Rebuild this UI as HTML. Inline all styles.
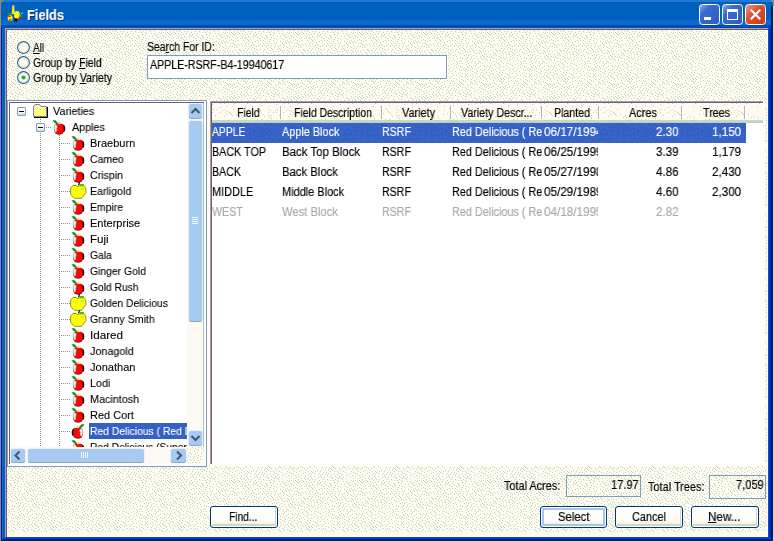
<!DOCTYPE html>
<html><head><meta charset="utf-8"><title>Fields</title><style>
html,body{margin:0;padding:0}
body{width:774px;height:542px;position:relative;overflow:hidden;background:#FFFBF0;font-family:"Liberation Sans",sans-serif}
.a{position:absolute}
.t{position:absolute;white-space:pre;line-height:16px;transform-origin:0 0;display:block;will-change:transform;-webkit-text-stroke:0.16px}
.ts{text-shadow:1px 1px 0 #0A2C8C}
.tr{-webkit-text-stroke:0.1px}
.clip{position:absolute;overflow:hidden}
u{text-decoration:underline;text-decoration-thickness:1px;text-underline-offset:1px}
</style></head><body>
<svg class="a" width="0" height="0"><defs>
<pattern id="d" width="64" height="64" patternUnits="userSpaceOnUse"><path d="M5 0.5h1M11 0.5h1M14 0.5h1M19 0.5h1M26 0.5h1M30 0.5h1M38 0.5h1M41 0.5h1M44 0.5h1M0 1.5h1M8 1.5h1M15 1.5h1M35 1.5h1M42 1.5h1M45 1.5h1M49 1.5h1M52 1.5h1M60 1.5h1M3 2.5h1M6 2.5h1M10 2.5h1M24 2.5h1M28 2.5h1M32 2.5h1M39 2.5h1M46 2.5h1M56 2.5h1M11 3.5h1M16 3.5h1M19 3.5h1M26 3.5h1M30 3.5h1M33 3.5h1M36 3.5h1M40 3.5h1M43 3.5h1M51 3.5h1M59 3.5h1M62 3.5h1M7 4.5h1M20 4.5h1M23 4.5h1M34 4.5h1M38 4.5h1M45 4.5h1M48 4.5h1M54 4.5h1M57 4.5h1M2 5.5h1M10 5.5h1M21 5.5h1M27 5.5h1M31 5.5h1M35 5.5h1M42 5.5h1M55 5.5h1M61 5.5h1M3 6.5h1M14 6.5h1M17 6.5h1M22 6.5h1M25 6.5h1M28 6.5h1M33 6.5h1M49 6.5h1M53 6.5h1M56 6.5h1M4 7.5h1M8 7.5h1M23 7.5h1M30 7.5h1M38 7.5h1M43 7.5h1M46 7.5h1M50 7.5h1M58 7.5h1M63 7.5h1M1 8.5h1M11 8.5h1M18 8.5h1M26 8.5h1M36 8.5h1M41 8.5h1M47 8.5h1M54 8.5h1M60 8.5h1M3 9.5h1M7 9.5h1M13 9.5h1M20 9.5h1M32 9.5h1M48 9.5h1M51 9.5h1M0 10.5h1M10 10.5h1M24 10.5h1M30 10.5h1M34 10.5h1M38 10.5h1M44 10.5h1M49 10.5h1M58 10.5h1M61 10.5h1M6 11.5h1M17 11.5h1M22 11.5h1M27 11.5h1M36 11.5h1M50 11.5h1M56 11.5h1M2 12.5h1M13 12.5h1M25 12.5h1M28 12.5h1M47 12.5h1M53 12.5h1M59 12.5h1M0 13.5h1M4 13.5h1M7 13.5h1M11 13.5h1M19 13.5h1M23 13.5h1M31 13.5h1M34 13.5h1M42 13.5h1M20 14.5h1M26 14.5h1M35 14.5h1M38 14.5h1M46 14.5h1M49 14.5h1M54 14.5h1M61 14.5h1M1 15.5h1M5 15.5h1M8 15.5h1M12 15.5h1M17 15.5h1M21 15.5h1M36 15.5h1M40 15.5h1M43 15.5h1M52 15.5h1M55 15.5h1M59 15.5h1M3 16.5h1M15 16.5h1M23 16.5h1M27 16.5h1M30 16.5h1M33 16.5h1M37 16.5h1M47 16.5h1M50 16.5h1M57 16.5h1M63 16.5h1M7 17.5h1M11 17.5h1M20 17.5h1M24 17.5h1M35 17.5h1M38 17.5h1M53 17.5h1M4 18.5h1M8 18.5h1M16 18.5h1M26 18.5h1M29 18.5h1M46 18.5h1M49 18.5h1M55 18.5h1M1 19.5h1M9 19.5h1M14 19.5h1M17 19.5h1M40 19.5h1M52 19.5h1M57 19.5h1M61 19.5h1M7 20.5h1M18 20.5h1M21 20.5h1M24 20.5h1M28 20.5h1M36 20.5h1M41 20.5h1M44 20.5h1M48 20.5h1M59 20.5h1M0 21.5h1M10 21.5h1M15 21.5h1M19 21.5h1M25 21.5h1M30 21.5h1M33 21.5h1M42 21.5h1M45 21.5h1M55 21.5h1M3 22.5h1M12 22.5h1M22 22.5h1M26 22.5h1M38 22.5h1M47 22.5h1M50 22.5h1M53 22.5h1M57 22.5h1M61 22.5h1M5 23.5h1M8 23.5h1M20 23.5h1M24 23.5h1M29 23.5h1M39 23.5h1M44 23.5h1M58 23.5h1M0 24.5h1M11 24.5h1M15 24.5h1M31 24.5h1M35 24.5h1M40 24.5h1M48 24.5h1M51 24.5h1M54 24.5h1M59 24.5h1M9 25.5h1M13 25.5h1M18 25.5h1M27 25.5h1M38 25.5h1M41 25.5h1M46 25.5h1M57 25.5h1M62 25.5h1M1 26.5h1M21 26.5h1M25 26.5h1M28 26.5h1M32 26.5h1M36 26.5h1M44 26.5h1M55 26.5h1M5 27.5h1M12 27.5h1M16 27.5h1M29 27.5h1M34 27.5h1M37 27.5h1M45 27.5h1M48 27.5h1M51 27.5h1M59 27.5h1M2 28.5h1M7 28.5h1M10 28.5h1M19 28.5h1M26 28.5h1M30 28.5h1M38 28.5h1M46 28.5h1M57 28.5h1M62 28.5h1M11 29.5h1M15 29.5h1M23 29.5h1M28 29.5h1M31 29.5h1M41 29.5h1M44 29.5h1M49 29.5h1M55 29.5h1M4 30.5h1M17 30.5h1M32 30.5h1M35 30.5h1M52 30.5h1M60 30.5h1M63 30.5h1M1 31.5h1M6 31.5h1M12 31.5h1M19 31.5h1M24 31.5h1M38 31.5h1M46 31.5h1M54 31.5h1M58 31.5h1M2 32.5h1M10 32.5h1M16 32.5h1M25 32.5h1M30 32.5h1M34 32.5h1M41 32.5h1M51 32.5h1M4 33.5h1M7 33.5h1M13 33.5h1M20 33.5h1M23 33.5h1M27 33.5h1M36 33.5h1M43 33.5h1M48 33.5h1M53 33.5h1M62 33.5h1M1 34.5h1M11 34.5h1M21 34.5h1M39 34.5h1M44 34.5h1M55 34.5h1M60 34.5h1M3 35.5h1M14 35.5h1M18 35.5h1M32 35.5h1M35 35.5h1M51 35.5h1M57 35.5h1M63 35.5h1M5 36.5h1M12 36.5h1M16 36.5h1M20 36.5h1M25 36.5h1M29 36.5h1M40 36.5h1M45 36.5h1M48 36.5h1M1 37.5h1M7 37.5h1M13 37.5h1M23 37.5h1M31 37.5h1M34 37.5h1M42 37.5h1M53 37.5h1M59 37.5h1M10 38.5h1M17 38.5h1M37 38.5h1M44 38.5h1M55 38.5h1M62 38.5h1M4 39.5h1M8 39.5h1M11 39.5h1M21 39.5h1M25 39.5h1M29 39.5h1M33 39.5h1M40 39.5h1M51 39.5h1M57 39.5h1M6 40.5h1M9 40.5h1M12 40.5h1M15 40.5h1M27 40.5h1M38 40.5h1M45 40.5h1M48 40.5h1M54 40.5h1M61 40.5h1M0 41.5h1M10 41.5h1M17 41.5h1M22 41.5h1M36 41.5h1M41 41.5h1M59 41.5h1M5 42.5h1M19 42.5h1M26 42.5h1M31 42.5h1M34 42.5h1M44 42.5h1M47 42.5h1M3 43.5h1M7 43.5h1M12 43.5h1M21 43.5h1M28 43.5h1M37 43.5h1M50 43.5h1M54 43.5h1M57 43.5h1M61 43.5h1M10 44.5h1M17 44.5h1M25 44.5h1M30 44.5h1M35 44.5h1M38 44.5h1M42 44.5h1M46 44.5h1M52 44.5h1M1 45.5h1M5 45.5h1M11 45.5h1M15 45.5h1M27 45.5h1M33 45.5h1M53 45.5h1M62 45.5h1M7 46.5h1M12 46.5h1M20 46.5h1M24 46.5h1M28 46.5h1M39 46.5h1M44 46.5h1M49 46.5h1M54 46.5h1M59 46.5h1M4 47.5h1M10 47.5h1M17 47.5h1M22 47.5h1M29 47.5h1M34 47.5h1M37 47.5h1M42 47.5h1M51 47.5h1M55 47.5h1M60 47.5h1M25 48.5h1M30 48.5h1M40 48.5h1M45 48.5h1M48 48.5h1M53 48.5h1M58 48.5h1M63 48.5h1M1 49.5h1M6 49.5h1M12 49.5h1M16 49.5h1M21 49.5h1M31 49.5h1M35 49.5h1M43 49.5h1M46 49.5h1M49 49.5h1M8 50.5h1M19 50.5h1M28 50.5h1M38 50.5h1M44 50.5h1M56 50.5h1M60 50.5h1M4 51.5h1M10 51.5h1M15 51.5h1M20 51.5h1M24 51.5h1M32 51.5h1M42 51.5h1M45 51.5h1M48 51.5h1M53 51.5h1M58 51.5h1M62 51.5h1M5 52.5h1M16 52.5h1M21 52.5h1M26 52.5h1M37 52.5h1M46 52.5h1M51 52.5h1M2 53.5h1M6 53.5h1M17 53.5h1M27 53.5h1M30 53.5h1M34 53.5h1M39 53.5h1M47 53.5h1M59 53.5h1M63 53.5h1M3 54.5h1M8 54.5h1M12 54.5h1M15 54.5h1M19 54.5h1M22 54.5h1M28 54.5h1M31 54.5h1M35 54.5h1M41 54.5h1M44 54.5h1M53 54.5h1M1 55.5h1M4 55.5h1M25 55.5h1M29 55.5h1M33 55.5h1M50 55.5h1M58 55.5h1M62 55.5h1M5 56.5h1M13 56.5h1M38 56.5h1M43 56.5h1M54 56.5h1M3 57.5h1M7 57.5h1M10 57.5h1M16 57.5h1M24 57.5h1M31 57.5h1M36 57.5h1M45 57.5h1M48 57.5h1M52 57.5h1M57 57.5h1M11 58.5h1M18 58.5h1M26 58.5h1M33 58.5h1M42 58.5h1M49 58.5h1M60 58.5h1M63 58.5h1M1 59.5h1M13 59.5h1M20 59.5h1M23 59.5h1M28 59.5h1M40 59.5h1M46 59.5h1M51 59.5h1M56 59.5h1M4 60.5h1M7 60.5h1M10 60.5h1M15 60.5h1M30 60.5h1M35 60.5h1M48 60.5h1M59 60.5h1M62 60.5h1M0 61.5h1M19 61.5h1M22 61.5h1M25 61.5h1M32 61.5h1M38 61.5h1M45 61.5h1M57 61.5h1M3 62.5h1M8 62.5h1M12 62.5h1M28 62.5h1M33 62.5h1M36 62.5h1M42 62.5h1M47 62.5h1M51 62.5h1M4 63.5h1M10 63.5h1M13 63.5h1M16 63.5h1M23 63.5h1M34 63.5h1M48 63.5h1M55 63.5h1M58 63.5h1M61 63.5h1" stroke="#B8DABC" stroke-width="1" fill="none" shape-rendering="crispEdges"/></pattern>
<pattern id="d2" width="64" height="64" patternUnits="userSpaceOnUse"><path d="M8 0.5h1M12 0.5h1M22 0.5h1M35 0.5h1M0 1.5h1M49 2.5h1M14 3.5h1M33 3.5h1M40 3.5h1M57 3.5h1M8 4.5h1M45 5.5h1M1 6.5h1M4 6.5h1M21 6.5h1M46 6.5h1M56 6.5h1M10 7.5h1M13 7.5h1M40 7.5h1M47 7.5h1M58 7.5h1M63 7.5h1M15 8.5h1M48 8.5h1M0 9.5h1M7 9.5h1M17 9.5h1M49 9.5h1M56 9.5h1M61 9.5h1M18 10.5h1M43 10.5h1M14 11.5h1M19 11.5h1M24 11.5h1M39 11.5h1M51 11.5h1M3 12.5h1M20 12.5h1M29 12.5h1M56 12.5h1M59 12.5h1M12 13.5h1M33 13.5h1M52 13.5h1M57 13.5h1M27 14.5h1M30 14.5h1M58 14.5h1M34 15.5h1M59 15.5h1M45 16.5h1M49 16.5h1M15 17.5h1M18 17.5h1M22 17.5h1M52 17.5h1M7 18.5h1M13 18.5h1M8 19.5h1M32 19.5h1M5 20.5h1M9 20.5h1M37 20.5h1M46 20.5h1M2 21.5h1M10 21.5h1M17 21.5h1M58 21.5h1M53 22.5h1M56 22.5h1M59 22.5h1M38 23.5h1M60 23.5h1M61 24.5h1M15 25.5h1M31 25.5h1M44 25.5h1M8 26.5h1M17 26.5h1M58 26.5h1M23 28.5h1M29 28.5h1M5 29.5h1M35 29.5h1M43 29.5h1M54 29.5h1M37 30.5h1M19 31.5h1M47 31.5h1M50 31.5h1M13 32.5h1M22 32.5h1M31 32.5h1M45 32.5h1M48 32.5h1M20 33.5h1M49 33.5h1M63 33.5h1M12 34.5h1M16 34.5h1M50 34.5h1M24 35.5h1M51 35.5h1M56 35.5h1M19 36.5h1M32 36.5h1M36 36.5h1M43 36.5h1M61 36.5h1M16 37.5h1M7 38.5h1M39 38.5h1M51 38.5h1M28 39.5h1M35 39.5h1M52 39.5h1M55 39.5h1M18 40.5h1M48 40.5h1M53 40.5h1M56 40.5h1M3 41.5h1M15 41.5h1M22 41.5h1M31 41.5h1M54 41.5h1M57 41.5h1M55 42.5h1M58 42.5h1M61 42.5h1M45 43.5h1M53 43.5h1M59 43.5h1M50 44.5h1M6 45.5h1M38 45.5h1M41 45.5h1M51 45.5h1M61 45.5h1M32 46.5h1M52 46.5h1M5 47.5h1M29 47.5h1M17 48.5h1M15 49.5h1M50 49.5h1M61 49.5h1M0 50.5h1M8 50.5h1M22 50.5h1M27 50.5h1M3 51.5h1M17 51.5h1M46 51.5h1M41 52.5h1M47 52.5h1M50 53.5h1M0 54.5h1M9 55.5h1M26 55.5h1M30 55.5h1M37 55.5h1M47 55.5h1M56 55.5h1M59 55.5h1M24 56.5h1M35 56.5h1M42 56.5h1M16 57.5h1M38 57.5h1M49 57.5h1M53 58.5h1M22 59.5h1M4 60.5h1M8 60.5h1M13 60.5h1M0 62.5h1M19 62.5h1M50 62.5h1M57 62.5h1M39 63.5h1M46 63.5h1" stroke="#B8DABC" stroke-width="1" fill="none" shape-rendering="crispEdges"/></pattern>
<pattern id="d3" width="64" height="64" patternUnits="userSpaceOnUse"><path d="M2 0.5h1M9 0.5h1M30 0.5h1M40 0.5h1M51 0.5h1M57 0.5h1M60 0.5h1M14 1.5h1M31 1.5h1M47 1.5h1M55 1.5h1M62 1.5h1M23 2.5h1M34 2.5h1M39 2.5h1M50 2.5h1M9 3.5h1M25 3.5h1M37 3.5h1M41 3.5h1M48 3.5h1M54 3.5h1M59 3.5h1M6 4.5h1M35 4.5h1M52 4.5h1M61 4.5h1M0 5.5h1M4 5.5h1M11 5.5h1M19 5.5h1M24 5.5h1M33 5.5h1M43 5.5h1M56 5.5h1M13 6.5h1M45 6.5h1M3 7.5h1M17 7.5h1M36 7.5h1M40 7.5h1M59 7.5h1M62 7.5h1M0 8.5h1M5 8.5h1M8 8.5h1M25 8.5h1M33 8.5h1M44 8.5h1M47 8.5h1M54 8.5h1M12 9.5h1M28 9.5h1M31 9.5h1M2 10.5h1M16 10.5h1M19 10.5h1M24 10.5h1M35 10.5h1M40 10.5h1M52 10.5h1M57 10.5h1M61 10.5h1M43 11.5h1M25 12.5h1M62 12.5h1M3 13.5h1M18 13.5h1M41 13.5h1M55 13.5h1M60 13.5h1M0 14.5h1M7 14.5h1M11 14.5h1M15 14.5h1M23 14.5h1M31 14.5h1M2 15.5h1M36 15.5h1M46 15.5h1M50 15.5h1M54 15.5h1M62 15.5h1M19 16.5h1M24 16.5h1M27 16.5h1M30 16.5h1M39 16.5h1M59 16.5h1M0 17.5h1M32 17.5h1M43 17.5h1M7 18.5h1M18 18.5h1M23 18.5h1M38 18.5h1M48 18.5h1M52 18.5h1M56 18.5h1M1 19.5h1M4 19.5h1M13 19.5h1M30 19.5h1M61 19.5h1M16 20.5h1M32 20.5h1M39 20.5h1M43 20.5h1M58 20.5h1M2 21.5h1M12 21.5h1M24 21.5h1M47 21.5h1M8 22.5h1M18 22.5h1M22 22.5h1M28 22.5h1M31 22.5h1M41 22.5h1M57 22.5h1M62 22.5h1M5 23.5h1M11 23.5h1M15 23.5h1M33 23.5h1M50 23.5h1M55 23.5h1M12 24.5h1M25 24.5h1M46 24.5h1M53 24.5h1M60 24.5h1M20 25.5h1M30 25.5h1M35 25.5h1M40 25.5h1M58 25.5h1M26 26.5h1M37 26.5h1M47 26.5h1M54 26.5h1M61 26.5h1M19 27.5h1M24 27.5h1M45 27.5h1M56 27.5h1M59 27.5h1M2 28.5h1M7 28.5h1M22 28.5h1M28 28.5h1M42 28.5h1M0 29.5h1M5 29.5h1M15 29.5h1M49 29.5h1M54 29.5h1M9 30.5h1M21 30.5h1M37 30.5h1M51 30.5h1M18 31.5h1M31 31.5h1M41 31.5h1M45 31.5h1M63 31.5h1M1 32.5h1M23 32.5h1M54 32.5h1M2 33.5h1M12 33.5h1M17 33.5h1M40 33.5h1M43 33.5h1M48 33.5h1M60 33.5h1M0 34.5h1M5 34.5h1M8 34.5h1M21 34.5h1M56 34.5h1M16 35.5h1M19 35.5h1M34 35.5h1M39 35.5h1M44 35.5h1M49 35.5h1M58 35.5h1M11 36.5h1M31 36.5h1M47 36.5h1M51 36.5h1M60 36.5h1M1 37.5h1M7 37.5h1M21 37.5h1M53 37.5h1M10 38.5h1M18 38.5h1M30 38.5h1M34 38.5h1M37 38.5h1M41 38.5h1M50 38.5h1M56 38.5h1M5 39.5h1M12 39.5h1M39 39.5h1M48 39.5h1M1 40.5h1M16 40.5h1M21 40.5h1M35 40.5h1M45 40.5h1M60 40.5h1M23 41.5h1M31 41.5h1M5 42.5h1M15 42.5h1M28 42.5h1M38 42.5h1M48 42.5h1M53 42.5h1M2 43.5h1M7 43.5h1M12 43.5h1M41 43.5h1M44 43.5h1M54 43.5h1M62 43.5h1M9 44.5h1M20 44.5h1M33 44.5h1M13 45.5h1M17 45.5h1M26 45.5h1M36 45.5h1M39 45.5h1M53 45.5h1M61 45.5h1M5 46.5h1M11 46.5h1M22 46.5h1M34 46.5h1M57 46.5h1M7 47.5h1M19 47.5h1M31 47.5h1M41 47.5h1M49 47.5h1M55 47.5h1M59 47.5h1M63 47.5h1M9 48.5h1M44 48.5h1M53 48.5h1M61 48.5h1M2 49.5h1M6 49.5h1M56 49.5h1M4 50.5h1M22 50.5h1M46 50.5h1M58 50.5h1M8 51.5h1M11 51.5h1M15 51.5h1M20 51.5h1M26 51.5h1M36 51.5h1M50 51.5h1M62 51.5h1M18 52.5h1M52 52.5h1M60 52.5h1M16 53.5h1M21 53.5h1M29 53.5h1M32 53.5h1M55 53.5h1M1 54.5h1M12 54.5h1M25 54.5h1M39 54.5h1M46 54.5h1M5 55.5h1M22 55.5h1M30 55.5h1M56 55.5h1M62 55.5h1M8 56.5h1M32 56.5h1M6 57.5h1M13 57.5h1M21 57.5h1M36 57.5h1M43 57.5h1M47 57.5h1M50 57.5h1M55 57.5h1M3 58.5h1M10 58.5h1M25 58.5h1M33 58.5h1M58 58.5h1M12 59.5h1M20 59.5h1M28 59.5h1M40 59.5h1M51 59.5h1M17 60.5h1M23 60.5h1M38 60.5h1M48 60.5h1M10 61.5h1M41 61.5h1M44 61.5h1M54 61.5h1M1 62.5h1M8 62.5h1M15 62.5h1M19 62.5h1M29 62.5h1M50 62.5h1M62 62.5h1M27 63.5h1M46 63.5h1" stroke="#4076C6" stroke-width="1" fill="none" shape-rendering="crispEdges"/></pattern>
<pattern id="ck" width="2" height="2" patternUnits="userSpaceOnUse"><rect width="2" height="2" fill="#FFFFFF"/><rect width="1" height="1" fill="#FFFF00"/><rect x="1" y="1" width="1" height="1" fill="#FFFF00"/></pattern>
</defs></svg>
<div class="a" style="left:0px;top:0px;width:774px;height:542px;background:#8C8C7C"></div>
<div class="a" style="left:773px;top:6px;width:1px;height:536px;background:#D8D8D8"></div>
<div class="a" style="left:0px;top:541px;width:774px;height:1px;background:#D8D8D8"></div>
<div class="a" style="left:1px;top:0px;width:772px;height:541px;background:#0060C0;border-radius:5px 5px 0 0"></div>
<div class="a" style="left:1px;top:6px;width:1px;height:534px;background:#0018C8"></div>
<div class="a" style="left:2px;top:6px;width:1px;height:533px;background:#1C64CC"></div>
<div class="a" style="left:768px;top:28px;width:1px;height:510px;background:#0050D0"></div>
<div class="a" style="left:769px;top:28px;width:1px;height:510px;background:#0038C8"></div>
<div class="a" style="left:770px;top:28px;width:1px;height:510px;background:#0024B8"></div>
<div class="a" style="left:3px;top:537px;width:766px;height:1px;background:#0050D0"></div>
<div class="a" style="left:3px;top:538px;width:766px;height:1px;background:#0038C8"></div>
<div class="a" style="left:1px;top:0px;width:772px;height:28px;background:linear-gradient(#2478D4 0,#2478D4 2px,#0060C0 2px,#0060C0 20px,#0C69C7 20px,#0C69C7 25px,#004CB8 25px,#004CB8 28px);border-radius:5px 5px 0 0"></div>
<div class="a" style="left:771px;top:6px;width:1px;height:535px;background:#001890"></div>
<div class="a" style="left:772px;top:6px;width:1px;height:535px;background:#101840"></div>
<div class="a" style="left:1px;top:539px;width:772px;height:1px;background:#0020A8"></div>
<div class="a" style="left:1px;top:540px;width:772px;height:1px;background:#001480"></div>
<div class="a" style="left:5px;top:28px;width:763px;height:509px;background:#A4A8A0"></div>
<div class="a" style="left:6px;top:29px;width:762px;height:508px;background:#6E5A7E"></div>
<div class="a" style="left:7px;top:30px;width:761px;height:507px;background:#fff"></div>
<div class="a" style="left:7px;top:30px;width:760px;height:506px;background:#FFFBF0"><svg class="a" style="left:0;top:0" width="760" height="502"><rect width="760" height="502" fill="url(#d)"/></svg></div>
<svg class="a" style="left:6px;top:5px" width="18" height="18" viewBox="0 0 18 18">
<path d="M6.3 1L8.3 1L8.6 5.5L9 9L5.6 9L6 5Z" fill="#F4EC10"/>
<path d="M6.3 1L7 0.2L8.6 0.6" stroke="#C0C0C0" stroke-width=".8" fill="none"/>
<ellipse cx="11" cy="10" rx="2.9" ry="4" fill="#FFFF00"/>
<path d="M1.5 8.2L5.5 8L6.8 9.6L3 9.8Z" fill="#18B018"/>
<ellipse cx="4.1" cy="13" rx="2.5" ry="3" fill="#FFF000"/>
<rect x="2.2" y="10.6" width="2.6" height="1.3" fill="#F01010"/><rect x="3" y="14.2" width="2.2" height="1.3" fill="#F01010"/>
<rect x="13.4" y="9.4" width="2" height="2.6" fill="#18C018"/>
<rect x="12.6" y="12" width="3" height="2" fill="#E81010"/>
<rect x="8.3" y="13.3" width="3" height="3.2" fill="#080820"/>
<path d="M15.2 9.2L16.6 7.2" stroke="#C8C8C8" stroke-width=".9"/>
</svg>
<div class="a" style="left:699px;top:4px;width:21px;height:21px;background:linear-gradient(135deg,#8CB0F0 0,#3868D0 30%,#2C5CC4 100%);border:1px solid #fff;border-radius:3.5px;box-sizing:border-box"></div>
<div class="a" style="left:722px;top:4px;width:21px;height:21px;background:linear-gradient(135deg,#8CB0F0 0,#3868D0 30%,#2C5CC4 100%);border:1px solid #fff;border-radius:3.5px;box-sizing:border-box"></div>
<div class="a" style="left:745px;top:4px;width:21px;height:21px;background:linear-gradient(135deg,#EC9A86 0,#DC5434 40%,#C83A14 100%);border:1px solid #fff;border-radius:3.5px;box-sizing:border-box"></div>
<div class="a" style="left:704px;top:17px;width:7px;height:3px;background:#fff"></div>
<div class="a" style="left:727px;top:9px;width:11px;height:11px;border:1px solid #fff;border-top:3px solid #fff;box-sizing:border-box"></div>
<svg class="a" style="left:745px;top:4px" width="21" height="21" viewBox="0 0 21 21"><path d="M5.8 5.8L15.2 15.2M15.2 5.8L5.8 15.2" stroke="#fff" stroke-width="2.2" stroke-linecap="butt"/></svg>
<svg class="a" style="left:17px;top:41px" width="13" height="13" viewBox="0 0 13 13"><circle cx="6.5" cy="6.5" r="5.9" fill="#FCFBF4" stroke="#285C90" stroke-width="1.2"/><circle cx="6.5" cy="6.5" r="4.6" fill="none" stroke="#E8E6D8" stroke-width="1"/></svg>
<svg class="a" style="left:17px;top:56px" width="13" height="13" viewBox="0 0 13 13"><circle cx="6.5" cy="6.5" r="5.9" fill="#FCFBF4" stroke="#285C90" stroke-width="1.2"/><circle cx="6.5" cy="6.5" r="4.6" fill="none" stroke="#E8E6D8" stroke-width="1"/></svg>
<svg class="a" style="left:17px;top:71px" width="13" height="13" viewBox="0 0 13 13"><circle cx="6.5" cy="6.5" r="5.9" fill="#FCFBF4" stroke="#285C90" stroke-width="1.2"/><circle cx="6.5" cy="6.5" r="4.6" fill="none" stroke="#E8E6D8" stroke-width="1"/><circle cx="6.5" cy="6.5" r="2.1" fill="#28AC28"/></svg>
<div class="a" style="left:147px;top:55px;width:300px;height:24px;background:#fff;border:1px solid #7F9DB9;box-sizing:border-box"></div>
<div class="a" style="left:7px;top:100px;width:200px;height:367px;background:#fff;border:1px solid #7F9DB9;box-sizing:border-box"></div>
<div class="a" style="left:9px;top:102px;width:195px;height:1px;background:#6E5A7E"></div>
<div class="a" style="left:9px;top:102px;width:1px;height:362px;background:#6E5A7E"></div>
<div class="clip" style="left:10px;top:103px;width:177px;height:344px"><div class="a" style="left:30px;top:30px;width:1px;height:314px;background:repeating-linear-gradient(#8C8C8C 0,#8C8C8C 1px,transparent 1px,transparent 2px)"></div>
<div class="a" style="left:49px;top:32px;width:1px;height:312px;background:repeating-linear-gradient(#8C8C8C 0,#8C8C8C 1px,transparent 1px,transparent 2px)"></div>
<div class="a" style="left:7px;top:4px;width:9px;height:9px;box-sizing:border-box;border:1px solid #7F9DB9;border-radius:1px;background:linear-gradient(#fff 50%,#D4D8CC)"><div class="a" style="left:1px;top:3px;width:5px;height:1px;background:#000"></div></div>
<svg class="a" style="left:23px;top:1px" width="16" height="14" viewBox="0 0 16 14">
<path d="M0.5 12.5L0.5 2.5L2 0.5L6.5 0.5L8 2.5L13.5 2.5L13.5 12.5Z" fill="#FFFFA0" stroke="#808080" stroke-width="1"/>
<rect x="1" y="3" width="12" height="9" fill="url(#ck)" shape-rendering="crispEdges"/>
<path d="M1.5 3.5L13 3.5" stroke="#fff" stroke-width="1"/>
<path d="M14.5 3L14.5 13.5L1 13.5" stroke="#000" stroke-width="1" fill="none"/>
</svg>
<div class="a" style="left:30px;top:16px;width:1px;height:4px;background:repeating-linear-gradient(#8C8C8C 0,#8C8C8C 1px,transparent 1px,transparent 2px)"></div>
<div class="a" style="left:26px;top:20px;width:9px;height:9px;box-sizing:border-box;border:1px solid #7F9DB9;border-radius:1px;background:linear-gradient(#fff 50%,#D4D8CC)"><div class="a" style="left:1px;top:3px;width:5px;height:1px;background:#000"></div></div>
<div class="a" style="left:36px;top:24px;width:6px;height:1px;background:repeating-linear-gradient(90deg,#8C8C8C 0,#8C8C8C 1px,transparent 1px,transparent 2px)"></div>
<svg class="a" style="left:42px;top:17px" width="14" height="15" viewBox="0 0 14 15"><g transform-origin="7 7">
<path d="M0.5 0.3L3.5 0.3L6.3 3.6L5.2 4.6L2.2 2.6Z" fill="#109018"/>
<path d="M7.3 2.2L6.8 4.8" stroke="#C8B400" stroke-width="1"/>
<path d="M3.2 4.2C4.5 3.2 6 3.8 7 4.3C8.4 3.4 10.6 3.4 12 5C13.3 6.6 13.2 9.6 12 11.8C10.8 13.8 9 14.6 7.3 14.2C5.6 14.7 3.6 13.8 2.6 12C1.8 10.4 1.6 6 3.2 4.2Z" fill="#F80808"/>
<path d="M11.6 5.2C13.2 6.6 13.3 9.6 12 11.6C12.2 9.6 12.2 7.2 11.6 5.2Z" fill="#100808" stroke="#100808" stroke-width=".8"/>
<path d="M2.6 4.6C3.8 4.2 4.6 4.6 4.8 5.6C5.6 6.4 5.4 7.8 4.6 8.6C5.2 9.8 4.8 11.4 3.6 12.4C2.4 11.4 1.6 6.4 2.6 4.6Z" fill="#E6EEEE" stroke="#A0A8A8" stroke-width=".5"/>
<path d="M3 13L7.3 14.6L11 13" stroke="#701010" stroke-width=".7" fill="none"/>
</g></svg>
<div class="a" style="left:51px;top:40px;width:10px;height:1px;background:repeating-linear-gradient(90deg,#8C8C8C 0,#8C8C8C 1px,transparent 1px,transparent 2px)"></div>
<svg class="a" style="left:61px;top:33px" width="14" height="15" viewBox="0 0 14 15"><g transform-origin="7 7">
<path d="M0.5 0.3L3.5 0.3L6.3 3.6L5.2 4.6L2.2 2.6Z" fill="#109018"/>
<path d="M7.3 2.2L6.8 4.8" stroke="#C8B400" stroke-width="1"/>
<path d="M3.2 4.2C4.5 3.2 6 3.8 7 4.3C8.4 3.4 10.6 3.4 12 5C13.3 6.6 13.2 9.6 12 11.8C10.8 13.8 9 14.6 7.3 14.2C5.6 14.7 3.6 13.8 2.6 12C1.8 10.4 1.6 6 3.2 4.2Z" fill="#F80808"/>
<path d="M11.6 5.2C13.2 6.6 13.3 9.6 12 11.6C12.2 9.6 12.2 7.2 11.6 5.2Z" fill="#100808" stroke="#100808" stroke-width=".8"/>
<path d="M2.6 4.6C3.8 4.2 4.6 4.6 4.8 5.6C5.6 6.4 5.4 7.8 4.6 8.6C5.2 9.8 4.8 11.4 3.6 12.4C2.4 11.4 1.6 6.4 2.6 4.6Z" fill="#E6EEEE" stroke="#A0A8A8" stroke-width=".5"/>
<path d="M3 13L7.3 14.6L11 13" stroke="#701010" stroke-width=".7" fill="none"/>
</g></svg>
<div class="a" style="left:51px;top:56px;width:10px;height:1px;background:repeating-linear-gradient(90deg,#8C8C8C 0,#8C8C8C 1px,transparent 1px,transparent 2px)"></div>
<svg class="a" style="left:61px;top:49px" width="14" height="15" viewBox="0 0 14 15"><g transform-origin="7 7">
<path d="M0.5 0.3L3.5 0.3L6.3 3.6L5.2 4.6L2.2 2.6Z" fill="#109018"/>
<path d="M7.3 2.2L6.8 4.8" stroke="#C8B400" stroke-width="1"/>
<path d="M3.2 4.2C4.5 3.2 6 3.8 7 4.3C8.4 3.4 10.6 3.4 12 5C13.3 6.6 13.2 9.6 12 11.8C10.8 13.8 9 14.6 7.3 14.2C5.6 14.7 3.6 13.8 2.6 12C1.8 10.4 1.6 6 3.2 4.2Z" fill="#F80808"/>
<path d="M11.6 5.2C13.2 6.6 13.3 9.6 12 11.6C12.2 9.6 12.2 7.2 11.6 5.2Z" fill="#100808" stroke="#100808" stroke-width=".8"/>
<path d="M2.6 4.6C3.8 4.2 4.6 4.6 4.8 5.6C5.6 6.4 5.4 7.8 4.6 8.6C5.2 9.8 4.8 11.4 3.6 12.4C2.4 11.4 1.6 6.4 2.6 4.6Z" fill="#E6EEEE" stroke="#A0A8A8" stroke-width=".5"/>
<path d="M3 13L7.3 14.6L11 13" stroke="#701010" stroke-width=".7" fill="none"/>
</g></svg>
<div class="a" style="left:51px;top:72px;width:10px;height:1px;background:repeating-linear-gradient(90deg,#8C8C8C 0,#8C8C8C 1px,transparent 1px,transparent 2px)"></div>
<svg class="a" style="left:61px;top:65px" width="14" height="15" viewBox="0 0 14 15"><g transform-origin="7 7">
<path d="M0.5 0.3L3.5 0.3L6.3 3.6L5.2 4.6L2.2 2.6Z" fill="#109018"/>
<path d="M7.3 2.2L6.8 4.8" stroke="#C8B400" stroke-width="1"/>
<path d="M3.2 4.2C4.5 3.2 6 3.8 7 4.3C8.4 3.4 10.6 3.4 12 5C13.3 6.6 13.2 9.6 12 11.8C10.8 13.8 9 14.6 7.3 14.2C5.6 14.7 3.6 13.8 2.6 12C1.8 10.4 1.6 6 3.2 4.2Z" fill="#F80808"/>
<path d="M11.6 5.2C13.2 6.6 13.3 9.6 12 11.6C12.2 9.6 12.2 7.2 11.6 5.2Z" fill="#100808" stroke="#100808" stroke-width=".8"/>
<path d="M2.6 4.6C3.8 4.2 4.6 4.6 4.8 5.6C5.6 6.4 5.4 7.8 4.6 8.6C5.2 9.8 4.8 11.4 3.6 12.4C2.4 11.4 1.6 6.4 2.6 4.6Z" fill="#E6EEEE" stroke="#A0A8A8" stroke-width=".5"/>
<path d="M3 13L7.3 14.6L11 13" stroke="#701010" stroke-width=".7" fill="none"/>
</g></svg>
<div class="a" style="left:51px;top:88px;width:10px;height:1px;background:repeating-linear-gradient(90deg,#8C8C8C 0,#8C8C8C 1px,transparent 1px,transparent 2px)"></div>
<svg class="a" style="left:60px;top:79px" width="17" height="17" viewBox="0 0 17 17">
<path d="M9.7 0.3L8.4 3" stroke="#101010" stroke-width="1.2"/>
<rect x="9" y="2" width="5" height="2.2" fill="#10E020"/>
<path d="M3 3.5L6 3.5L8 4.5L9.5 3.8L14 3.8L15.8 5.5L15.8 10.5L11.5 16.3L4.5 16.3L0.6 12.5L0.6 5.8Z" fill="#FFFF00" stroke="#908800" stroke-width=".9"/>
<path d="M11.3 8.2L11.3 6.8L13.6 6.8L13.6 8.2" stroke="#B8B8C8" stroke-width=".9" fill="none"/>
</svg>
<div class="a" style="left:51px;top:104px;width:10px;height:1px;background:repeating-linear-gradient(90deg,#8C8C8C 0,#8C8C8C 1px,transparent 1px,transparent 2px)"></div>
<svg class="a" style="left:61px;top:97px" width="14" height="15" viewBox="0 0 14 15"><g transform-origin="7 7">
<path d="M0.5 0.3L3.5 0.3L6.3 3.6L5.2 4.6L2.2 2.6Z" fill="#109018"/>
<path d="M7.3 2.2L6.8 4.8" stroke="#C8B400" stroke-width="1"/>
<path d="M3.2 4.2C4.5 3.2 6 3.8 7 4.3C8.4 3.4 10.6 3.4 12 5C13.3 6.6 13.2 9.6 12 11.8C10.8 13.8 9 14.6 7.3 14.2C5.6 14.7 3.6 13.8 2.6 12C1.8 10.4 1.6 6 3.2 4.2Z" fill="#F80808"/>
<path d="M11.6 5.2C13.2 6.6 13.3 9.6 12 11.6C12.2 9.6 12.2 7.2 11.6 5.2Z" fill="#100808" stroke="#100808" stroke-width=".8"/>
<path d="M2.6 4.6C3.8 4.2 4.6 4.6 4.8 5.6C5.6 6.4 5.4 7.8 4.6 8.6C5.2 9.8 4.8 11.4 3.6 12.4C2.4 11.4 1.6 6.4 2.6 4.6Z" fill="#E6EEEE" stroke="#A0A8A8" stroke-width=".5"/>
<path d="M3 13L7.3 14.6L11 13" stroke="#701010" stroke-width=".7" fill="none"/>
</g></svg>
<div class="a" style="left:51px;top:120px;width:10px;height:1px;background:repeating-linear-gradient(90deg,#8C8C8C 0,#8C8C8C 1px,transparent 1px,transparent 2px)"></div>
<svg class="a" style="left:61px;top:113px" width="14" height="15" viewBox="0 0 14 15"><g transform-origin="7 7">
<path d="M0.5 0.3L3.5 0.3L6.3 3.6L5.2 4.6L2.2 2.6Z" fill="#109018"/>
<path d="M7.3 2.2L6.8 4.8" stroke="#C8B400" stroke-width="1"/>
<path d="M3.2 4.2C4.5 3.2 6 3.8 7 4.3C8.4 3.4 10.6 3.4 12 5C13.3 6.6 13.2 9.6 12 11.8C10.8 13.8 9 14.6 7.3 14.2C5.6 14.7 3.6 13.8 2.6 12C1.8 10.4 1.6 6 3.2 4.2Z" fill="#F80808"/>
<path d="M11.6 5.2C13.2 6.6 13.3 9.6 12 11.6C12.2 9.6 12.2 7.2 11.6 5.2Z" fill="#100808" stroke="#100808" stroke-width=".8"/>
<path d="M2.6 4.6C3.8 4.2 4.6 4.6 4.8 5.6C5.6 6.4 5.4 7.8 4.6 8.6C5.2 9.8 4.8 11.4 3.6 12.4C2.4 11.4 1.6 6.4 2.6 4.6Z" fill="#E6EEEE" stroke="#A0A8A8" stroke-width=".5"/>
<path d="M3 13L7.3 14.6L11 13" stroke="#701010" stroke-width=".7" fill="none"/>
</g></svg>
<div class="a" style="left:51px;top:136px;width:10px;height:1px;background:repeating-linear-gradient(90deg,#8C8C8C 0,#8C8C8C 1px,transparent 1px,transparent 2px)"></div>
<svg class="a" style="left:61px;top:129px" width="14" height="15" viewBox="0 0 14 15"><g transform-origin="7 7">
<path d="M0.5 0.3L3.5 0.3L6.3 3.6L5.2 4.6L2.2 2.6Z" fill="#109018"/>
<path d="M7.3 2.2L6.8 4.8" stroke="#C8B400" stroke-width="1"/>
<path d="M3.2 4.2C4.5 3.2 6 3.8 7 4.3C8.4 3.4 10.6 3.4 12 5C13.3 6.6 13.2 9.6 12 11.8C10.8 13.8 9 14.6 7.3 14.2C5.6 14.7 3.6 13.8 2.6 12C1.8 10.4 1.6 6 3.2 4.2Z" fill="#F80808"/>
<path d="M11.6 5.2C13.2 6.6 13.3 9.6 12 11.6C12.2 9.6 12.2 7.2 11.6 5.2Z" fill="#100808" stroke="#100808" stroke-width=".8"/>
<path d="M2.6 4.6C3.8 4.2 4.6 4.6 4.8 5.6C5.6 6.4 5.4 7.8 4.6 8.6C5.2 9.8 4.8 11.4 3.6 12.4C2.4 11.4 1.6 6.4 2.6 4.6Z" fill="#E6EEEE" stroke="#A0A8A8" stroke-width=".5"/>
<path d="M3 13L7.3 14.6L11 13" stroke="#701010" stroke-width=".7" fill="none"/>
</g></svg>
<div class="a" style="left:51px;top:152px;width:10px;height:1px;background:repeating-linear-gradient(90deg,#8C8C8C 0,#8C8C8C 1px,transparent 1px,transparent 2px)"></div>
<svg class="a" style="left:61px;top:145px" width="14" height="15" viewBox="0 0 14 15"><g transform-origin="7 7">
<path d="M0.5 0.3L3.5 0.3L6.3 3.6L5.2 4.6L2.2 2.6Z" fill="#109018"/>
<path d="M7.3 2.2L6.8 4.8" stroke="#C8B400" stroke-width="1"/>
<path d="M3.2 4.2C4.5 3.2 6 3.8 7 4.3C8.4 3.4 10.6 3.4 12 5C13.3 6.6 13.2 9.6 12 11.8C10.8 13.8 9 14.6 7.3 14.2C5.6 14.7 3.6 13.8 2.6 12C1.8 10.4 1.6 6 3.2 4.2Z" fill="#F80808"/>
<path d="M11.6 5.2C13.2 6.6 13.3 9.6 12 11.6C12.2 9.6 12.2 7.2 11.6 5.2Z" fill="#100808" stroke="#100808" stroke-width=".8"/>
<path d="M2.6 4.6C3.8 4.2 4.6 4.6 4.8 5.6C5.6 6.4 5.4 7.8 4.6 8.6C5.2 9.8 4.8 11.4 3.6 12.4C2.4 11.4 1.6 6.4 2.6 4.6Z" fill="#E6EEEE" stroke="#A0A8A8" stroke-width=".5"/>
<path d="M3 13L7.3 14.6L11 13" stroke="#701010" stroke-width=".7" fill="none"/>
</g></svg>
<div class="a" style="left:51px;top:168px;width:10px;height:1px;background:repeating-linear-gradient(90deg,#8C8C8C 0,#8C8C8C 1px,transparent 1px,transparent 2px)"></div>
<svg class="a" style="left:61px;top:161px" width="14" height="15" viewBox="0 0 14 15"><g transform-origin="7 7">
<path d="M0.5 0.3L3.5 0.3L6.3 3.6L5.2 4.6L2.2 2.6Z" fill="#109018"/>
<path d="M7.3 2.2L6.8 4.8" stroke="#C8B400" stroke-width="1"/>
<path d="M3.2 4.2C4.5 3.2 6 3.8 7 4.3C8.4 3.4 10.6 3.4 12 5C13.3 6.6 13.2 9.6 12 11.8C10.8 13.8 9 14.6 7.3 14.2C5.6 14.7 3.6 13.8 2.6 12C1.8 10.4 1.6 6 3.2 4.2Z" fill="#F80808"/>
<path d="M11.6 5.2C13.2 6.6 13.3 9.6 12 11.6C12.2 9.6 12.2 7.2 11.6 5.2Z" fill="#100808" stroke="#100808" stroke-width=".8"/>
<path d="M2.6 4.6C3.8 4.2 4.6 4.6 4.8 5.6C5.6 6.4 5.4 7.8 4.6 8.6C5.2 9.8 4.8 11.4 3.6 12.4C2.4 11.4 1.6 6.4 2.6 4.6Z" fill="#E6EEEE" stroke="#A0A8A8" stroke-width=".5"/>
<path d="M3 13L7.3 14.6L11 13" stroke="#701010" stroke-width=".7" fill="none"/>
</g></svg>
<div class="a" style="left:51px;top:184px;width:10px;height:1px;background:repeating-linear-gradient(90deg,#8C8C8C 0,#8C8C8C 1px,transparent 1px,transparent 2px)"></div>
<svg class="a" style="left:61px;top:177px" width="14" height="15" viewBox="0 0 14 15"><g transform-origin="7 7">
<path d="M0.5 0.3L3.5 0.3L6.3 3.6L5.2 4.6L2.2 2.6Z" fill="#109018"/>
<path d="M7.3 2.2L6.8 4.8" stroke="#C8B400" stroke-width="1"/>
<path d="M3.2 4.2C4.5 3.2 6 3.8 7 4.3C8.4 3.4 10.6 3.4 12 5C13.3 6.6 13.2 9.6 12 11.8C10.8 13.8 9 14.6 7.3 14.2C5.6 14.7 3.6 13.8 2.6 12C1.8 10.4 1.6 6 3.2 4.2Z" fill="#F80808"/>
<path d="M11.6 5.2C13.2 6.6 13.3 9.6 12 11.6C12.2 9.6 12.2 7.2 11.6 5.2Z" fill="#100808" stroke="#100808" stroke-width=".8"/>
<path d="M2.6 4.6C3.8 4.2 4.6 4.6 4.8 5.6C5.6 6.4 5.4 7.8 4.6 8.6C5.2 9.8 4.8 11.4 3.6 12.4C2.4 11.4 1.6 6.4 2.6 4.6Z" fill="#E6EEEE" stroke="#A0A8A8" stroke-width=".5"/>
<path d="M3 13L7.3 14.6L11 13" stroke="#701010" stroke-width=".7" fill="none"/>
</g></svg>
<div class="a" style="left:51px;top:200px;width:10px;height:1px;background:repeating-linear-gradient(90deg,#8C8C8C 0,#8C8C8C 1px,transparent 1px,transparent 2px)"></div>
<svg class="a" style="left:60px;top:191px" width="17" height="17" viewBox="0 0 17 17">
<path d="M9.7 0.3L8.4 3" stroke="#101010" stroke-width="1.2"/>
<rect x="9" y="2" width="5" height="2.2" fill="#10E020"/>
<path d="M3 3.5L6 3.5L8 4.5L9.5 3.8L14 3.8L15.8 5.5L15.8 10.5L11.5 16.3L4.5 16.3L0.6 12.5L0.6 5.8Z" fill="#FFFF00" stroke="#908800" stroke-width=".9"/>
<path d="M11.3 8.2L11.3 6.8L13.6 6.8L13.6 8.2" stroke="#B8B8C8" stroke-width=".9" fill="none"/>
</svg>
<div class="a" style="left:51px;top:216px;width:10px;height:1px;background:repeating-linear-gradient(90deg,#8C8C8C 0,#8C8C8C 1px,transparent 1px,transparent 2px)"></div>
<svg class="a" style="left:60px;top:207px" width="17" height="17" viewBox="0 0 17 17">
<path d="M9.7 0.3L8.4 3" stroke="#101010" stroke-width="1.2"/>
<rect x="9" y="2" width="5" height="2.2" fill="#10E020"/>
<path d="M3 3.5L6 3.5L8 4.5L9.5 3.8L14 3.8L15.8 5.5L15.8 10.5L11.5 16.3L4.5 16.3L0.6 12.5L0.6 5.8Z" fill="#FFFF00" stroke="#908800" stroke-width=".9"/>
<path d="M11.3 8.2L11.3 6.8L13.6 6.8L13.6 8.2" stroke="#B8B8C8" stroke-width=".9" fill="none"/>
</svg>
<div class="a" style="left:51px;top:232px;width:10px;height:1px;background:repeating-linear-gradient(90deg,#8C8C8C 0,#8C8C8C 1px,transparent 1px,transparent 2px)"></div>
<svg class="a" style="left:61px;top:225px" width="14" height="15" viewBox="0 0 14 15"><g transform-origin="7 7">
<path d="M0.5 0.3L3.5 0.3L6.3 3.6L5.2 4.6L2.2 2.6Z" fill="#109018"/>
<path d="M7.3 2.2L6.8 4.8" stroke="#C8B400" stroke-width="1"/>
<path d="M3.2 4.2C4.5 3.2 6 3.8 7 4.3C8.4 3.4 10.6 3.4 12 5C13.3 6.6 13.2 9.6 12 11.8C10.8 13.8 9 14.6 7.3 14.2C5.6 14.7 3.6 13.8 2.6 12C1.8 10.4 1.6 6 3.2 4.2Z" fill="#F80808"/>
<path d="M11.6 5.2C13.2 6.6 13.3 9.6 12 11.6C12.2 9.6 12.2 7.2 11.6 5.2Z" fill="#100808" stroke="#100808" stroke-width=".8"/>
<path d="M2.6 4.6C3.8 4.2 4.6 4.6 4.8 5.6C5.6 6.4 5.4 7.8 4.6 8.6C5.2 9.8 4.8 11.4 3.6 12.4C2.4 11.4 1.6 6.4 2.6 4.6Z" fill="#E6EEEE" stroke="#A0A8A8" stroke-width=".5"/>
<path d="M3 13L7.3 14.6L11 13" stroke="#701010" stroke-width=".7" fill="none"/>
</g></svg>
<div class="a" style="left:51px;top:248px;width:10px;height:1px;background:repeating-linear-gradient(90deg,#8C8C8C 0,#8C8C8C 1px,transparent 1px,transparent 2px)"></div>
<svg class="a" style="left:61px;top:241px" width="14" height="15" viewBox="0 0 14 15"><g transform-origin="7 7">
<path d="M0.5 0.3L3.5 0.3L6.3 3.6L5.2 4.6L2.2 2.6Z" fill="#109018"/>
<path d="M7.3 2.2L6.8 4.8" stroke="#C8B400" stroke-width="1"/>
<path d="M3.2 4.2C4.5 3.2 6 3.8 7 4.3C8.4 3.4 10.6 3.4 12 5C13.3 6.6 13.2 9.6 12 11.8C10.8 13.8 9 14.6 7.3 14.2C5.6 14.7 3.6 13.8 2.6 12C1.8 10.4 1.6 6 3.2 4.2Z" fill="#F80808"/>
<path d="M11.6 5.2C13.2 6.6 13.3 9.6 12 11.6C12.2 9.6 12.2 7.2 11.6 5.2Z" fill="#100808" stroke="#100808" stroke-width=".8"/>
<path d="M2.6 4.6C3.8 4.2 4.6 4.6 4.8 5.6C5.6 6.4 5.4 7.8 4.6 8.6C5.2 9.8 4.8 11.4 3.6 12.4C2.4 11.4 1.6 6.4 2.6 4.6Z" fill="#E6EEEE" stroke="#A0A8A8" stroke-width=".5"/>
<path d="M3 13L7.3 14.6L11 13" stroke="#701010" stroke-width=".7" fill="none"/>
</g></svg>
<div class="a" style="left:51px;top:264px;width:10px;height:1px;background:repeating-linear-gradient(90deg,#8C8C8C 0,#8C8C8C 1px,transparent 1px,transparent 2px)"></div>
<svg class="a" style="left:61px;top:257px" width="14" height="15" viewBox="0 0 14 15"><g transform-origin="7 7">
<path d="M0.5 0.3L3.5 0.3L6.3 3.6L5.2 4.6L2.2 2.6Z" fill="#109018"/>
<path d="M7.3 2.2L6.8 4.8" stroke="#C8B400" stroke-width="1"/>
<path d="M3.2 4.2C4.5 3.2 6 3.8 7 4.3C8.4 3.4 10.6 3.4 12 5C13.3 6.6 13.2 9.6 12 11.8C10.8 13.8 9 14.6 7.3 14.2C5.6 14.7 3.6 13.8 2.6 12C1.8 10.4 1.6 6 3.2 4.2Z" fill="#F80808"/>
<path d="M11.6 5.2C13.2 6.6 13.3 9.6 12 11.6C12.2 9.6 12.2 7.2 11.6 5.2Z" fill="#100808" stroke="#100808" stroke-width=".8"/>
<path d="M2.6 4.6C3.8 4.2 4.6 4.6 4.8 5.6C5.6 6.4 5.4 7.8 4.6 8.6C5.2 9.8 4.8 11.4 3.6 12.4C2.4 11.4 1.6 6.4 2.6 4.6Z" fill="#E6EEEE" stroke="#A0A8A8" stroke-width=".5"/>
<path d="M3 13L7.3 14.6L11 13" stroke="#701010" stroke-width=".7" fill="none"/>
</g></svg>
<div class="a" style="left:51px;top:280px;width:10px;height:1px;background:repeating-linear-gradient(90deg,#8C8C8C 0,#8C8C8C 1px,transparent 1px,transparent 2px)"></div>
<svg class="a" style="left:61px;top:273px" width="14" height="15" viewBox="0 0 14 15"><g transform-origin="7 7">
<path d="M0.5 0.3L3.5 0.3L6.3 3.6L5.2 4.6L2.2 2.6Z" fill="#109018"/>
<path d="M7.3 2.2L6.8 4.8" stroke="#C8B400" stroke-width="1"/>
<path d="M3.2 4.2C4.5 3.2 6 3.8 7 4.3C8.4 3.4 10.6 3.4 12 5C13.3 6.6 13.2 9.6 12 11.8C10.8 13.8 9 14.6 7.3 14.2C5.6 14.7 3.6 13.8 2.6 12C1.8 10.4 1.6 6 3.2 4.2Z" fill="#F80808"/>
<path d="M11.6 5.2C13.2 6.6 13.3 9.6 12 11.6C12.2 9.6 12.2 7.2 11.6 5.2Z" fill="#100808" stroke="#100808" stroke-width=".8"/>
<path d="M2.6 4.6C3.8 4.2 4.6 4.6 4.8 5.6C5.6 6.4 5.4 7.8 4.6 8.6C5.2 9.8 4.8 11.4 3.6 12.4C2.4 11.4 1.6 6.4 2.6 4.6Z" fill="#E6EEEE" stroke="#A0A8A8" stroke-width=".5"/>
<path d="M3 13L7.3 14.6L11 13" stroke="#701010" stroke-width=".7" fill="none"/>
</g></svg>
<div class="a" style="left:51px;top:296px;width:10px;height:1px;background:repeating-linear-gradient(90deg,#8C8C8C 0,#8C8C8C 1px,transparent 1px,transparent 2px)"></div>
<svg class="a" style="left:61px;top:289px" width="14" height="15" viewBox="0 0 14 15"><g transform-origin="7 7">
<path d="M0.5 0.3L3.5 0.3L6.3 3.6L5.2 4.6L2.2 2.6Z" fill="#109018"/>
<path d="M7.3 2.2L6.8 4.8" stroke="#C8B400" stroke-width="1"/>
<path d="M3.2 4.2C4.5 3.2 6 3.8 7 4.3C8.4 3.4 10.6 3.4 12 5C13.3 6.6 13.2 9.6 12 11.8C10.8 13.8 9 14.6 7.3 14.2C5.6 14.7 3.6 13.8 2.6 12C1.8 10.4 1.6 6 3.2 4.2Z" fill="#F80808"/>
<path d="M11.6 5.2C13.2 6.6 13.3 9.6 12 11.6C12.2 9.6 12.2 7.2 11.6 5.2Z" fill="#100808" stroke="#100808" stroke-width=".8"/>
<path d="M2.6 4.6C3.8 4.2 4.6 4.6 4.8 5.6C5.6 6.4 5.4 7.8 4.6 8.6C5.2 9.8 4.8 11.4 3.6 12.4C2.4 11.4 1.6 6.4 2.6 4.6Z" fill="#E6EEEE" stroke="#A0A8A8" stroke-width=".5"/>
<path d="M3 13L7.3 14.6L11 13" stroke="#701010" stroke-width=".7" fill="none"/>
</g></svg>
<div class="a" style="left:51px;top:312px;width:10px;height:1px;background:repeating-linear-gradient(90deg,#8C8C8C 0,#8C8C8C 1px,transparent 1px,transparent 2px)"></div>
<svg class="a" style="left:61px;top:305px" width="14" height="15" viewBox="0 0 14 15"><g transform-origin="7 7">
<path d="M0.5 0.3L3.5 0.3L6.3 3.6L5.2 4.6L2.2 2.6Z" fill="#109018"/>
<path d="M7.3 2.2L6.8 4.8" stroke="#C8B400" stroke-width="1"/>
<path d="M3.2 4.2C4.5 3.2 6 3.8 7 4.3C8.4 3.4 10.6 3.4 12 5C13.3 6.6 13.2 9.6 12 11.8C10.8 13.8 9 14.6 7.3 14.2C5.6 14.7 3.6 13.8 2.6 12C1.8 10.4 1.6 6 3.2 4.2Z" fill="#F80808"/>
<path d="M11.6 5.2C13.2 6.6 13.3 9.6 12 11.6C12.2 9.6 12.2 7.2 11.6 5.2Z" fill="#100808" stroke="#100808" stroke-width=".8"/>
<path d="M2.6 4.6C3.8 4.2 4.6 4.6 4.8 5.6C5.6 6.4 5.4 7.8 4.6 8.6C5.2 9.8 4.8 11.4 3.6 12.4C2.4 11.4 1.6 6.4 2.6 4.6Z" fill="#E6EEEE" stroke="#A0A8A8" stroke-width=".5"/>
<path d="M3 13L7.3 14.6L11 13" stroke="#701010" stroke-width=".7" fill="none"/>
</g></svg>
<div class="a" style="left:51px;top:328px;width:10px;height:1px;background:repeating-linear-gradient(90deg,#8C8C8C 0,#8C8C8C 1px,transparent 1px,transparent 2px)"></div>
<svg class="a" style="left:61px;top:321px" width="14" height="15" viewBox="0 0 14 15"><g style="transform:scaleX(-1)" transform-origin="7 7">
<path d="M0.5 0.3L3.5 0.3L6.3 3.6L5.2 4.6L2.2 2.6Z" fill="#109018"/>
<path d="M7.3 2.2L6.8 4.8" stroke="#C8B400" stroke-width="1"/>
<path d="M3.2 4.2C4.5 3.2 6 3.8 7 4.3C8.4 3.4 10.6 3.4 12 5C13.3 6.6 13.2 9.6 12 11.8C10.8 13.8 9 14.6 7.3 14.2C5.6 14.7 3.6 13.8 2.6 12C1.8 10.4 1.6 6 3.2 4.2Z" fill="#F80808"/>
<path d="M11.6 5.2C13.2 6.6 13.3 9.6 12 11.6C12.2 9.6 12.2 7.2 11.6 5.2Z" fill="#100808" stroke="#100808" stroke-width=".8"/>
<path d="M2.6 4.6C3.8 4.2 4.6 4.6 4.8 5.6C5.6 6.4 5.4 7.8 4.6 8.6C5.2 9.8 4.8 11.4 3.6 12.4C2.4 11.4 1.6 6.4 2.6 4.6Z" fill="#E6EEEE" stroke="#A0A8A8" stroke-width=".5"/>
<path d="M3 13L7.3 14.6L11 13" stroke="#701010" stroke-width=".7" fill="none"/>
</g></svg>
<div class="a" style="left:79px;top:320px;width:98px;height:16px;background:#3560C4"></div>
<div class="a" style="left:51px;top:344px;width:10px;height:1px;background:repeating-linear-gradient(90deg,#8C8C8C 0,#8C8C8C 1px,transparent 1px,transparent 2px)"></div>
<svg class="a" style="left:61px;top:337px" width="14" height="15" viewBox="0 0 14 15"><g transform-origin="7 7">
<path d="M0.5 0.3L3.5 0.3L6.3 3.6L5.2 4.6L2.2 2.6Z" fill="#109018"/>
<path d="M7.3 2.2L6.8 4.8" stroke="#C8B400" stroke-width="1"/>
<path d="M3.2 4.2C4.5 3.2 6 3.8 7 4.3C8.4 3.4 10.6 3.4 12 5C13.3 6.6 13.2 9.6 12 11.8C10.8 13.8 9 14.6 7.3 14.2C5.6 14.7 3.6 13.8 2.6 12C1.8 10.4 1.6 6 3.2 4.2Z" fill="#F80808"/>
<path d="M11.6 5.2C13.2 6.6 13.3 9.6 12 11.6C12.2 9.6 12.2 7.2 11.6 5.2Z" fill="#100808" stroke="#100808" stroke-width=".8"/>
<path d="M2.6 4.6C3.8 4.2 4.6 4.6 4.8 5.6C5.6 6.4 5.4 7.8 4.6 8.6C5.2 9.8 4.8 11.4 3.6 12.4C2.4 11.4 1.6 6.4 2.6 4.6Z" fill="#E6EEEE" stroke="#A0A8A8" stroke-width=".5"/>
<path d="M3 13L7.3 14.6L11 13" stroke="#701010" stroke-width=".7" fill="none"/>
</g></svg></div>
<div class="a" style="left:187px;top:103px;width:17px;height:344px;background:#FCFAF2"></div>
<div class="a" style="left:203px;top:103px;width:1px;height:344px;background:#A8C4BE"></div>
<div class="a" style="left:189px;top:104px;width:13px;height:14px;background:#A6CAF0;border-radius:2px;box-shadow:0 1px 0 #90A8CC, 0 0 0 1px #E8F0FC"></div>
<svg class="a" style="left:189px;top:104px" width="13" height="14" viewBox="0 0 13 14"><path d="M2.5 9L6.5 5L10.5 9" stroke="#3C5870" stroke-width="2" fill="none"/></svg>
<div class="a" style="left:189px;top:121px;width:13px;height:200px;background:#A6CAF0;border-radius:2px;box-shadow:0 1px 0 #90A8CC, 0 0 0 1px #E8F0FC"></div>
<div class="a" style="left:192px;top:217px;width:6px;height:1px;background:#F4F8FF"></div>
<div class="a" style="left:192px;top:219px;width:6px;height:1px;background:#F4F8FF"></div>
<div class="a" style="left:192px;top:221px;width:6px;height:1px;background:#F4F8FF"></div>
<div class="a" style="left:192px;top:223px;width:6px;height:1px;background:#F4F8FF"></div>
<div class="a" style="left:189px;top:431px;width:13px;height:14px;background:#A6CAF0;border-radius:2px;box-shadow:0 1px 0 #90A8CC, 0 0 0 1px #E8F0FC"></div>
<svg class="a" style="left:189px;top:431px" width="13" height="14" viewBox="0 0 13 14"><path d="M2.5 5L6.5 9L10.5 5" stroke="#3C5870" stroke-width="2" fill="none"/></svg>
<div class="a" style="left:187px;top:447px;width:17px;height:16px;background:#FFFBF0"><svg class="a" style="left:0;top:0" width="17" height="16"><rect width="17" height="16" fill="url(#d)"/></svg></div>
<div class="a" style="left:10px;top:447px;width:177px;height:17px;background:#FCFAF2"></div>
<div class="a" style="left:11px;top:449px;width:14px;height:13px;background:#A6CAF0;border-radius:2px;box-shadow:0 1px 0 #90A8CC, 0 0 0 1px #E8F0FC"></div>
<svg class="a" style="left:11px;top:449px" width="14" height="13" viewBox="0 0 14 13"><path d="M8.5 2.5L4.5 6.5L8.5 10.5" stroke="#3C5870" stroke-width="2" fill="none"/></svg>
<div class="a" style="left:28px;top:449px;width:116px;height:13px;background:#A6CAF0;border-radius:2px;box-shadow:0 1px 0 #90A8CC, 0 0 0 1px #E8F0FC"></div>
<div class="a" style="left:81px;top:452px;width:1px;height:6px;background:#EEF4FE"></div>
<div class="a" style="left:83px;top:452px;width:1px;height:6px;background:#EEF4FE"></div>
<div class="a" style="left:85px;top:452px;width:1px;height:6px;background:#EEF4FE"></div>
<div class="a" style="left:87px;top:452px;width:1px;height:6px;background:#EEF4FE"></div>
<div class="a" style="left:171px;top:449px;width:15px;height:13px;background:#A6CAF0;border-radius:2px;box-shadow:0 1px 0 #90A8CC, 0 0 0 1px #E8F0FC"></div>
<svg class="a" style="left:171px;top:449px" width="15" height="13" viewBox="0 0 15 13"><path d="M6 2.5L10 6.5L6 10.5" stroke="#3C5870" stroke-width="2" fill="none"/></svg>
<div class="a" style="left:207px;top:100px;width:3px;height:365px;background:#FFFBF0"></div>
<div class="a" style="left:210px;top:101px;width:555px;height:365px;background:#fff"></div>
<div class="a" style="left:210px;top:101px;width:554px;height:364px;background:#FFFBF0"></div>
<div class="a" style="left:210px;top:101px;width:553px;height:363px;background:#A4A4A4"></div>
<div class="a" style="left:211px;top:102px;width:552px;height:362px;background:#6E5A7E"></div>
<div class="a" style="left:212px;top:103px;width:551px;height:361px;background:#fff"></div>
<div class="a" style="left:212px;top:103px;width:551px;height:17px;background:#FFFBF0"><svg class="a" style="left:0;top:0" width="551" height="17"><rect width="551" height="17" fill="url(#d2)"/></svg></div>
<div class="a" style="left:212px;top:120px;width:551px;height:2px;background:#C0DCC0"></div>
<div class="a" style="left:212px;top:122px;width:551px;height:1px;background:#C4C8C8"></div>
<div class="a" style="left:280px;top:106px;width:1px;height:13px;background:#B4B4B8"></div>
<div class="a" style="left:281px;top:106px;width:1px;height:13px;background:#fff"></div>
<div class="a" style="left:381px;top:106px;width:1px;height:13px;background:#B4B4B8"></div>
<div class="a" style="left:382px;top:106px;width:1px;height:13px;background:#fff"></div>
<div class="a" style="left:450px;top:106px;width:1px;height:13px;background:#B4B4B8"></div>
<div class="a" style="left:451px;top:106px;width:1px;height:13px;background:#fff"></div>
<div class="a" style="left:541px;top:106px;width:1px;height:13px;background:#B4B4B8"></div>
<div class="a" style="left:542px;top:106px;width:1px;height:13px;background:#fff"></div>
<div class="a" style="left:598px;top:106px;width:1px;height:13px;background:#B4B4B8"></div>
<div class="a" style="left:599px;top:106px;width:1px;height:13px;background:#fff"></div>
<div class="a" style="left:681px;top:106px;width:1px;height:13px;background:#B4B4B8"></div>
<div class="a" style="left:682px;top:106px;width:1px;height:13px;background:#fff"></div>
<div class="a" style="left:744px;top:106px;width:1px;height:13px;background:#B4B4B8"></div>
<div class="a" style="left:745px;top:106px;width:1px;height:13px;background:#fff"></div>
<div class="a" style="left:212px;top:123px;width:534px;height:20px;background:#3560C4"><svg class="a" style="left:0;top:0" width="534" height="20"><rect width="534" height="20" fill="url(#d3)"/></svg></div>
<div class="a" style="left:566px;top:475px;width:75px;height:22px;border:1px solid #7F9DB9;box-sizing:border-box"></div>
<div class="a" style="left:709px;top:475px;width:57px;height:24px;border:1px solid #7F9DB9;box-sizing:border-box"></div>
<div class="a" style="left:210px;top:506px;width:68px;height:22px;box-sizing:border-box;border:1px solid #003C74;border-radius:3px;background:linear-gradient(#fff,#FDFCF6 65%,#EEEBDD);box-shadow:inset 0 0 0 1px #fff, inset -1px -2px 0 1px #D8D4C4"></div>
<div class="a" style="left:540px;top:506px;width:67px;height:22px;box-sizing:border-box;border:1px solid #003C74;border-radius:3px;background:linear-gradient(#fff,#FDFCF6 65%,#EEEBDD);box-shadow:inset 0 0 0 1px #fff, inset 0 0 0 3px #A9C4F0"></div>
<div class="a" style="left:615px;top:506px;width:68px;height:22px;box-sizing:border-box;border:1px solid #003C74;border-radius:3px;background:linear-gradient(#fff,#FDFCF6 65%,#EEEBDD);box-shadow:inset 0 0 0 1px #fff, inset -1px -2px 0 1px #D8D4C4"></div>
<div class="a" style="left:691px;top:506px;width:68px;height:22px;box-sizing:border-box;border:1px solid #003C74;border-radius:3px;background:linear-gradient(#fff,#FDFCF6 65%,#EEEBDD);box-shadow:inset 0 0 0 1px #fff, inset -1px -2px 0 1px #D8D4C4"></div>
<span class="t ts" style="left:27.07px;top:7px;font-size:14px;color:#fff;transform:scaleX(0.9159);font-weight:700;">Fields</span>
<span class="t" style="left:32.95px;top:40px;font-size:12.5px;color:#000;transform:scaleX(0.8061);"><u>A</u>ll</span>
<span class="t" style="left:32.92px;top:55px;font-size:12.5px;color:#000;transform:scaleX(0.8387);">Group by <u>F</u>ield</span>
<span class="t" style="left:32.91px;top:70px;font-size:12.5px;color:#000;transform:scaleX(0.8504);">Group by <u>V</u>ariety</span>
<span class="t" style="left:147.32px;top:39px;font-size:12.5px;color:#000;transform:scaleX(0.8336);">Sea<u>r</u>ch For ID:</span>
<span class="t" style="left:149.51px;top:57px;font-size:12.5px;color:#000;transform:scaleX(0.8507);">APPLE-RSRF-B4-19940617</span>
<div class="clip" style="left:10px;top:103px;width:177px;height:344px"><span class="t tr" style="left:42.70px;top:0px;font-size:11px;color:#000;transform:scaleX(0.9839);">Varieties</span></div>
<div class="clip" style="left:10px;top:103px;width:177px;height:344px"><span class="t tr" style="left:61.70px;top:16px;font-size:11px;color:#000;transform:scaleX(0.9748);">Apples</span></div>
<div class="clip" style="left:10px;top:103px;width:177px;height:344px"><span class="t tr" style="left:79.89px;top:32px;font-size:11px;color:#000;transform:scaleX(0.9969);">Braeburn</span></div>
<div class="clip" style="left:10px;top:103px;width:177px;height:344px"><span class="t tr" style="left:79.92px;top:48px;font-size:11px;color:#000;transform:scaleX(0.9519);">Cameo</span></div>
<div class="clip" style="left:10px;top:103px;width:177px;height:344px"><span class="t tr" style="left:79.91px;top:64px;font-size:11px;color:#000;transform:scaleX(0.9663);">Crispin</span></div>
<div class="clip" style="left:10px;top:103px;width:177px;height:344px"><span class="t tr" style="left:79.91px;top:80px;font-size:11px;color:#000;transform:scaleX(0.9642);">Earligold</span></div>
<div class="clip" style="left:10px;top:103px;width:177px;height:344px"><span class="t tr" style="left:79.92px;top:96px;font-size:11px;color:#000;transform:scaleX(0.9487);">Empire</span></div>
<div class="clip" style="left:10px;top:103px;width:177px;height:344px"><span class="t tr" style="left:79.88px;top:112px;font-size:11px;color:#000;transform:scaleX(1.0018);">Enterprise</span></div>
<div class="clip" style="left:10px;top:103px;width:177px;height:344px"><span class="t tr" style="left:79.85px;top:128px;font-size:11px;color:#000;transform:scaleX(1.0549);">Fuji</span></div>
<div class="clip" style="left:10px;top:103px;width:177px;height:344px"><span class="t tr" style="left:79.93px;top:144px;font-size:11px;color:#000;transform:scaleX(0.9395);">Gala</span></div>
<div class="clip" style="left:10px;top:103px;width:177px;height:344px"><span class="t tr" style="left:79.93px;top:160px;font-size:11px;color:#000;transform:scaleX(0.9433);">Ginger Gold</span></div>
<div class="clip" style="left:10px;top:103px;width:177px;height:344px"><span class="t tr" style="left:79.93px;top:176px;font-size:11px;color:#000;transform:scaleX(0.9336);">Gold Rush</span></div>
<div class="clip" style="left:10px;top:103px;width:177px;height:344px"><span class="t tr" style="left:79.93px;top:192px;font-size:11px;color:#000;transform:scaleX(0.9361);">Golden Delicious</span></div>
<div class="clip" style="left:10px;top:103px;width:177px;height:344px"><span class="t tr" style="left:79.91px;top:208px;font-size:11px;color:#000;transform:scaleX(0.9617);">Granny Smith</span></div>
<div class="clip" style="left:10px;top:103px;width:177px;height:344px"><span class="t tr" style="left:79.84px;top:224px;font-size:11px;color:#000;transform:scaleX(1.0614);">Idared</span></div>
<div class="clip" style="left:10px;top:103px;width:177px;height:344px"><span class="t tr" style="left:79.90px;top:240px;font-size:11px;color:#000;transform:scaleX(0.9809);">Jonagold</span></div>
<div class="clip" style="left:10px;top:103px;width:177px;height:344px"><span class="t tr" style="left:79.88px;top:256px;font-size:11px;color:#000;transform:scaleX(1.0037);">Jonathan</span></div>
<div class="clip" style="left:10px;top:103px;width:177px;height:344px"><span class="t tr" style="left:79.90px;top:272px;font-size:11px;color:#000;transform:scaleX(0.9811);">Lodi</span></div>
<div class="clip" style="left:10px;top:103px;width:177px;height:344px"><span class="t tr" style="left:79.90px;top:288px;font-size:11px;color:#000;transform:scaleX(0.9813);">Macintosh</span></div>
<div class="clip" style="left:10px;top:103px;width:177px;height:344px"><span class="t tr" style="left:79.89px;top:304px;font-size:11px;color:#000;transform:scaleX(0.9953);">Red Cort</span></div>
<div class="clip" style="left:10px;top:103px;width:177px;height:344px"><span class="t tr" style="left:79.93px;top:320px;font-size:11px;color:#fff;transform:scaleX(0.9388);">Red Delicious ( Red Delicious )</span></div>
<div class="clip" style="left:10px;top:103px;width:177px;height:344px"><span class="t tr" style="left:79.93px;top:336px;font-size:11px;color:#000;transform:scaleX(0.9316);">Red Delicious (Super</span></div>
<span class="t" style="left:237.32px;top:105px;font-size:12.5px;color:#000;transform:scaleX(0.8324);">Field</span>
<span class="t" style="left:294.32px;top:105px;font-size:12.5px;color:#000;transform:scaleX(0.8364);">Field Description</span>
<span class="t" style="left:401.59px;top:105px;font-size:12.5px;color:#000;transform:scaleX(0.8719);">Variety</span>
<span class="t" style="left:460.81px;top:105px;font-size:12.5px;color:#000;transform:scaleX(0.8528);">Variety Descr...</span>
<span class="t" style="left:554.31px;top:105px;font-size:12.5px;color:#000;transform:scaleX(0.8484);">Planted</span>
<span class="t" style="left:628.79px;top:105px;font-size:12.5px;color:#000;transform:scaleX(0.8738);">Acres</span>
<span class="t" style="left:702.70px;top:105px;font-size:12.5px;color:#000;transform:scaleX(0.8569);">Trees</span>
<span class="t" style="left:212.03px;top:124px;font-size:12.5px;color:#fff;transform:scaleX(0.8271);">APPLE</span>
<span class="t" style="left:281.59px;top:124px;font-size:12.5px;color:#fff;transform:scaleX(0.8697);">Apple Block</span>
<span class="t" style="left:382.41px;top:124px;font-size:12.5px;color:#fff;transform:scaleX(0.8486);">RSRF</span>
<div class="clip" style="left:451px;top:122px;width:91px;height:18px"><span class="t" style="left:0.60px;top:2px;font-size:12.5px;color:#fff;transform:scaleX(0.8665);">Red Delicious ( Red Delicious )</span></div>
<div class="clip" style="left:542px;top:122px;width:56px;height:18px"><span class="t" style="left:1.64px;top:2px;font-size:12.5px;color:#fff;transform:scaleX(0.9355);">06/17/1994</span></div>
<span class="t" style="left:655.75px;top:124px;font-size:12.5px;color:#fff;transform:scaleX(0.9243);">2.30</span>
<span class="t" style="left:712.14px;top:124px;font-size:12.5px;color:#fff;transform:scaleX(0.9307);">1,150</span>
<span class="t" style="left:212.00px;top:144px;font-size:12.5px;color:#000;transform:scaleX(0.8603);">BACK TOP</span>
<span class="t" style="left:281.56px;top:144px;font-size:12.5px;color:#000;transform:scaleX(0.9162);">Back Top Block</span>
<span class="t" style="left:382.41px;top:144px;font-size:12.5px;color:#000;transform:scaleX(0.8486);">RSRF</span>
<div class="clip" style="left:451px;top:142px;width:91px;height:18px"><span class="t" style="left:0.60px;top:2px;font-size:12.5px;color:#000;transform:scaleX(0.8665);">Red Delicious ( Red Delicious )</span></div>
<div class="clip" style="left:542px;top:142px;width:56px;height:18px"><span class="t" style="left:1.64px;top:2px;font-size:12.5px;color:#000;transform:scaleX(0.9355);">06/25/1999</span></div>
<span class="t" style="left:655.75px;top:144px;font-size:12.5px;color:#000;transform:scaleX(0.9243);">3.39</span>
<span class="t" style="left:712.14px;top:144px;font-size:12.5px;color:#000;transform:scaleX(0.9307);">1,179</span>
<span class="t" style="left:212.01px;top:164px;font-size:12.5px;color:#000;transform:scaleX(0.8513);">BACK</span>
<span class="t" style="left:281.56px;top:164px;font-size:12.5px;color:#000;transform:scaleX(0.9050);">Back Block</span>
<span class="t" style="left:382.41px;top:164px;font-size:12.5px;color:#000;transform:scaleX(0.8486);">RSRF</span>
<div class="clip" style="left:451px;top:162px;width:91px;height:18px"><span class="t" style="left:0.60px;top:2px;font-size:12.5px;color:#000;transform:scaleX(0.8665);">Red Delicious ( Red Delicious )</span></div>
<div class="clip" style="left:542px;top:162px;width:56px;height:18px"><span class="t" style="left:1.64px;top:2px;font-size:12.5px;color:#000;transform:scaleX(0.9355);">05/27/1998</span></div>
<span class="t" style="left:655.75px;top:164px;font-size:12.5px;color:#000;transform:scaleX(0.9243);">4.86</span>
<span class="t" style="left:712.14px;top:164px;font-size:12.5px;color:#000;transform:scaleX(0.9307);">2,430</span>
<span class="t" style="left:211.99px;top:184px;font-size:12.5px;color:#000;transform:scaleX(0.8704);">MIDDLE</span>
<span class="t" style="left:281.59px;top:184px;font-size:12.5px;color:#000;transform:scaleX(0.8765);">Middle Block</span>
<span class="t" style="left:382.41px;top:184px;font-size:12.5px;color:#000;transform:scaleX(0.8486);">RSRF</span>
<div class="clip" style="left:451px;top:182px;width:91px;height:18px"><span class="t" style="left:0.60px;top:2px;font-size:12.5px;color:#000;transform:scaleX(0.8665);">Red Delicious ( Red Delicious )</span></div>
<div class="clip" style="left:542px;top:182px;width:56px;height:18px"><span class="t" style="left:1.64px;top:2px;font-size:12.5px;color:#000;transform:scaleX(0.9355);">05/29/1989</span></div>
<span class="t" style="left:655.75px;top:184px;font-size:12.5px;color:#000;transform:scaleX(0.9243);">4.60</span>
<span class="t" style="left:712.14px;top:184px;font-size:12.5px;color:#000;transform:scaleX(0.9307);">2,300</span>
<span class="t" style="left:212.01px;top:204px;font-size:12.5px;color:#A8A8A8;transform:scaleX(0.8526);">WEST</span>
<span class="t" style="left:281.57px;top:204px;font-size:12.5px;color:#A8A8A8;transform:scaleX(0.8983);">West Block</span>
<span class="t" style="left:382.41px;top:204px;font-size:12.5px;color:#A8A8A8;transform:scaleX(0.8486);">RSRF</span>
<div class="clip" style="left:451px;top:202px;width:91px;height:18px"><span class="t" style="left:0.60px;top:2px;font-size:12.5px;color:#A8A8A8;transform:scaleX(0.8665);">Red Delicious ( Red Delicious )</span></div>
<div class="clip" style="left:542px;top:202px;width:56px;height:18px"><span class="t" style="left:1.64px;top:2px;font-size:12.5px;color:#A8A8A8;transform:scaleX(0.9355);">04/18/1995</span></div>
<span class="t" style="left:655.75px;top:204px;font-size:12.5px;color:#A8A8A8;transform:scaleX(0.9243);">2.82</span>
<span class="t" style="left:503.59px;top:478px;font-size:12.5px;color:#000;transform:scaleX(0.8683);">Total Acres:</span>
<span class="t" style="left:611.08px;top:477px;font-size:12.5px;color:#000;transform:scaleX(0.8835);">17.97</span>
<span class="t" style="left:648.09px;top:479px;font-size:12.5px;color:#000;transform:scaleX(0.8730);">Total Trees:</span>
<span class="t" style="left:736.08px;top:477px;font-size:12.5px;color:#000;transform:scaleX(0.8835);">7,059</span>
<span class="t" style="left:228.84px;top:509px;font-size:12.5px;color:#000;transform:scaleX(0.8151);">Find...</span>
<span class="t" style="left:557.96px;top:509px;font-size:12.5px;color:#000;transform:scaleX(0.9057);">Select</span>
<span class="t" style="left:632.29px;top:509px;font-size:12.5px;color:#000;transform:scaleX(0.8714);">Cancel</span>
<span class="t" style="left:708.24px;top:509px;font-size:12.5px;color:#000;transform:scaleX(0.9358);"><u>N</u>ew...</span>
</body></html>
